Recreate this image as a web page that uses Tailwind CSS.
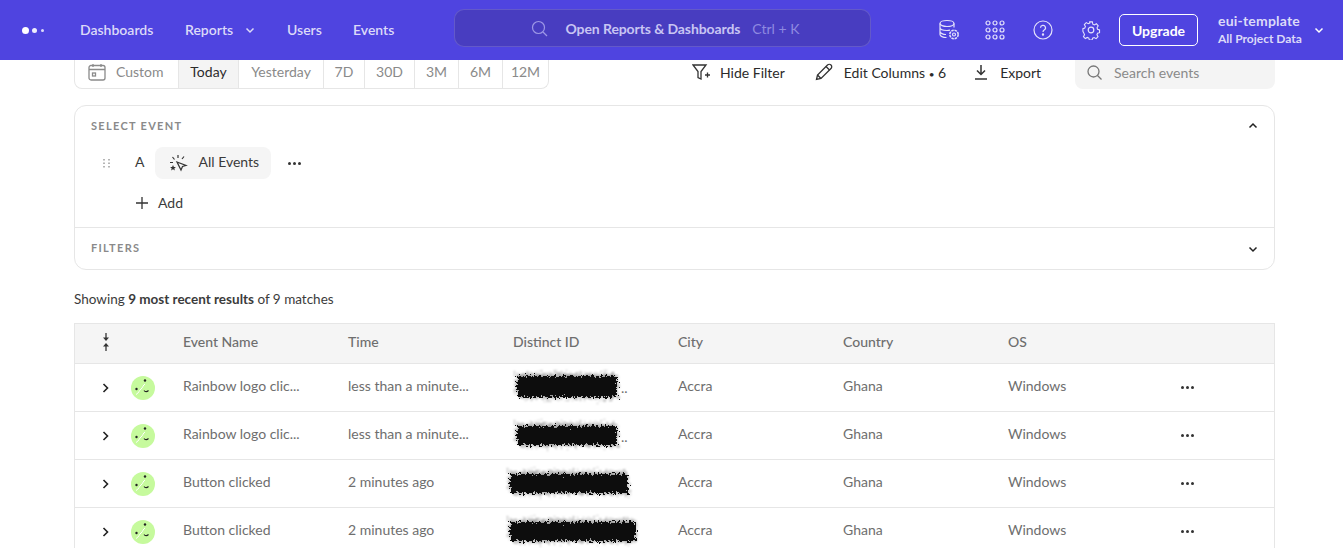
<!DOCTYPE html>
<html lang="en">
  <head>
    <meta charset="UTF-8" />
    <title>Events</title>
    <script src="https://cdn.jsdelivr.net/npm/@tailwindcss/browser@4"></script>
  </head>
  <body class="h-[548px] overflow-hidden bg-white font-['Lato',sans-serif] text-[14px] text-[#3b3b3b]">
    <!-- shared filters for the redacted ids -->
    <svg width="0" height="0" class="absolute">
      <filter id="scribble" x="-10%" y="-40%" width="120%" height="180%">
        <feTurbulence type="fractalNoise" baseFrequency="0.45" numOctaves="2" seed="4" />
        <feDisplacementMap in="SourceGraphic" scale="10" />
        <feGaussianBlur stdDeviation="0.6" />
      </filter>
      <filter id="halo" x="-10%" y="-40%" width="120%" height="180%">
        <feTurbulence type="fractalNoise" baseFrequency="0.7" numOctaves="2" seed="9" />
        <feDisplacementMap in="SourceGraphic" scale="16" />
        <feGaussianBlur stdDeviation="0.8" />
      </filter>
    </svg>

    <!-- Top nav -->
    <nav class="flex h-[60px] items-center bg-[#4f44e0] text-white">
      <div class="flex w-[80px] items-center pl-[22px]">
        <span class="h-[7px] w-[7px] rounded-full bg-white"></span>
        <span class="ml-[3px] h-[5px] w-[5px] rounded-full bg-white/90"></span>
        <span class="ml-[4px] h-[3px] w-[3px] rounded-full bg-white/80"></span>
      </div>
      <div class="flex w-[374px] items-center pb-[1px] font-semibold text-[#dcdaf8]">
        <a class="w-[104px]">Dashboards</a>
        <a class="flex w-[103px] items-center pl-[1px]">
          Reports
          <svg class="ml-[12px] h-[10px] w-[10px]" viewBox="0 0 10 10" fill="none" stroke="currentColor" stroke-width="1.500"><path d="M1.500 3.500 5 7l3.500-3.500" /></svg>
        </a>
        <a class="w-[66px]">Users</a>
        <a>Events</a>
      </div>
      <div class="mb-[4px] flex h-[38px] w-[417px] items-center justify-center rounded-[10px] border border-white/15 bg-[#483dc0] pl-[5px]">
        <svg class="h-[17px] w-[17px] text-[#9d97e6]" viewBox="0 0 17 17" fill="none" stroke="currentColor" stroke-width="1.200"><circle cx="7.500" cy="7.500" r="6" /><path d="m12 12 4 4" /></svg>
        <span class="ml-[18px] font-bold tracking-[-0.1px] text-[#c8c5f3]">Open Reports &amp; Dashboards</span>
        <span class="ml-[12px] text-[#8f89e0]">Ctrl + K</span>
      </div>
      <div class="ml-[67px] flex items-center text-[#e4e2fb]">
        <svg class="h-[22px] w-[22px]" viewBox="0 0 22 22" fill="none" stroke="currentColor" stroke-width="1.200">
          <ellipse cx="9" cy="4.500" rx="7" ry="3" />
          <path d="M2 4.500v11c0 1.600 3 3 6.500 3M2 8.500c0 1.700 3 3 7 3 1 0 2-.1 3-.3M2 12.500c0 1.600 3 3 6 3M16 4.500v4" />
          <circle cx="16" cy="15.500" r="1.500" />
          <circle cx="16" cy="15.500" r="4.200" stroke-dasharray="2.500 0.800" stroke-width="1.500" />
        </svg>
        <svg class="ml-[25px] h-[20px] w-[20px]" viewBox="0 0 20 20" fill="none" stroke="currentColor" stroke-width="1.200">
          <circle cx="3" cy="3" r="2" /><circle cx="10" cy="3" r="2" /><circle cx="17" cy="3" r="2" />
          <circle cx="3" cy="10" r="2" /><circle cx="10" cy="10" r="2" /><circle cx="17" cy="10" r="2" />
          <circle cx="3" cy="17" r="2" /><circle cx="10" cy="17" r="2" /><circle cx="17" cy="17" r="2" />
        </svg>
        <svg class="ml-[28px] h-[20px] w-[20px]" viewBox="0 0 20 20" fill="none" stroke="currentColor" stroke-width="1.200">
          <circle cx="10" cy="10" r="9" />
          <path d="M7.500 7.800a2.500 2.500 0 1 1 3.700 2.200c-.8.500-1.200 1-1.200 2" />
          <circle cx="10" cy="14.500" r=".6" fill="currentColor" />
        </svg>
        <svg class="ml-[28px] h-[20px] w-[20px]" viewBox="0 0 20 20" fill="none" stroke="currentColor" stroke-width="1.200">
          <circle cx="10" cy="10" r="2.800" />
          <path d="M8.500 1h3l.5 2.500 1.700.8 2.300-1.200 2 2.200-1.300 2.200.6 1.700 2.200.8v3l-2.200.6-.7 1.700 1.200 2.200-2.100 2.100-2.200-1.200-1.700.7-.6 2.100h-3l-.6-2.200-1.700-.7-2.200 1.200-2.100-2.100 1.200-2.200-.7-1.700L1 11.500v-3l2.100-.7.700-1.700-1.200-2.200 2.100-2.100 2.200 1.200 1.700-.7z" transform="translate(1 1) scale(.9)" />
        </svg>
      </div>
      <button class="ml-[18px] h-[32px] w-[79px] rounded-[5px] border border-white text-center font-bold text-white">Upgrade</button>
      <div class="ml-[20px] pb-[2px] leading-none">
        <div class="text-[14px] font-bold tracking-[0.2px] text-[#dcdaf8]">eui-template</div>
        <div class="mt-[5px] text-[12px] font-bold text-[#dcdaf8]">All Project Data</div>
      </div>
      <svg class="ml-[12px] h-[10px] w-[10px]" viewBox="0 0 10 10" fill="none" stroke="white" stroke-width="1.500"><path d="M1.500 3.500 5 7l3.500-3.500" /></svg>
    </nav>

    <main class="ml-[74px] w-[1201px]">
      <!-- Toolbar -->
      <div class="flex h-[29px] items-stretch">
        <div class="flex w-[475px] items-stretch rounded-b-[8px] border border-t-0 border-[#e6e6e6] text-[#8a8a8a]">
          <div class="flex w-[103px] items-center pb-[5px] pl-[13px]">
            <svg class="h-[18px] w-[18px]" viewBox="0 0 18 18" fill="none" stroke="#8a8a8a" stroke-width="1.300">
              <rect x="1" y="2.500" width="16" height="14.500" rx="2" />
              <path d="M1 6.500h16M5 1v3M13 1v3" />
              <rect x="4.500" y="10" width="3" height="3" />
            </svg>
            <span class="ml-[10px]">Custom</span>
          </div>
          <div class="flex w-[61px] items-center justify-center border-x border-[#e6e6e6] bg-[#f4f4f4] pb-[5px] text-[#2b2b2b]">Today</div>
          <div class="flex w-[85px] items-center justify-center border-r border-[#e6e6e6] pb-[5px]">Yesterday</div>
          <div class="flex w-[41px] items-center justify-center border-r border-[#e6e6e6] pb-[5px]">7D</div>
          <div class="flex w-[50px] items-center justify-center border-r border-[#e6e6e6] pb-[5px]">30D</div>
          <div class="flex w-[44px] items-center justify-center border-r border-[#e6e6e6] pb-[5px]">3M</div>
          <div class="flex w-[44px] items-center justify-center border-r border-[#e6e6e6] pb-[5px]">6M</div>
          <div class="flex flex-1 items-center justify-center pb-[5px]">12M</div>
        </div>
        <div class="ml-[143px] flex items-center pb-[5px] text-[#2b2b2b]">
          <svg class="h-[18px] w-[19px]" viewBox="0 0 19 18" fill="none" stroke="#333" stroke-width="1.300">
            <path d="M1 2h13L9 8.500V16l-3-1.500v-6z" />
            <path d="M13 12h5M15.500 9.500v5" />
          </svg>
          <span class="ml-[9px]">Hide Filter</span>
          <svg class="ml-[30px] h-[18px] w-[18px]" viewBox="0 0 18 18" fill="none" stroke="#333" stroke-width="1.300">
            <path d="M1.500 16.500 2.500 12 12.500 2a1.800 1.800 0 0 1 3.500 3.500L6 15.500z" />
            <path d="m11 3.500 3.500 3.500M2.500 12 6 15.500" />
          </svg>
          <span class="ml-[11px]">Edit Columns <span class="text-[10px]">•</span> 6</span>
          <svg class="ml-[28px] h-[16px] w-[14px]" viewBox="0 0 14 16" fill="none" stroke="#333" stroke-width="1.500">
            <path d="M7 1v9M3 6.500 7 10.500l4-4M1 15h12" />
          </svg>
          <span class="ml-[12px]">Export</span>
        </div>
        <div class="ml-auto flex w-[200px] items-center rounded-b-[8px] bg-[#f4f4f4] pb-[5px] pl-[12px] text-[#8a8a8a]">
          <svg class="h-[15px] w-[15px]" viewBox="0 0 15 15" fill="none" stroke="#777" stroke-width="1.300"><circle cx="6.500" cy="6.500" r="5.500" /><path d="m10.500 10.500 4 4" /></svg>
          <span class="ml-[12px]">Search events</span>
        </div>
      </div>

      <!-- Query card -->
      <section class="mt-[16px] h-[165px] rounded-[12px] border border-[#e6e6e6]">
        <div class="h-[122px] border-b border-[#e6e6e6]">
          <div class="flex items-center justify-between pl-[16px] pr-[16px] pt-[13px]">
            <span class="text-[11px] font-bold leading-[13px] tracking-[1.300px] text-[#8a8a8a]">SELECT EVENT</span>
            <svg class="h-[10px] w-[10px]" viewBox="0 0 10 10" fill="none" stroke="#222" stroke-width="1.500"><path d="M1.500 6.500 5 3l3.500 3.500" /></svg>
          </div>
          <div class="mt-[15px] flex h-[32px] items-center">
            <svg class="ml-[28px] h-[9px] w-[8px]" viewBox="0 0 8 9" fill="#b5b5b5">
              <rect x="0" y="0" width="2" height="1.500" /><rect x="5" y="0" width="2" height="1.500" />
              <rect x="0" y="3.500" width="2" height="1.500" /><rect x="5" y="3.500" width="2" height="1.500" />
              <rect x="0" y="7" width="2" height="1.500" /><rect x="5" y="7" width="2" height="1.500" />
            </svg>
            <span class="ml-[24px] pb-[3px]">A</span>
            <div class="ml-[11px] flex h-[32px] w-[116px] items-center rounded-[8px] bg-[#f5f5f5] pl-[14px]">
              <svg class="h-[18px] w-[19px]" viewBox="0 0 19 18" fill="none" stroke="#333" stroke-width="1.200">
                <path d="M8 8 17 11.500l-3.500 1L12 16z" />
                <path d="M9 1v3M3.500 3 5.500 5.500M15 2.500 13 5M1 8.500h3" />
                <path d="m4 11 .9 2h2l-1.600 1.400.6 2.100L4 15.300l-1.900 1.200.6-2.100L1.100 13h2z" fill="#333" stroke="none" />
              </svg>
              <span class="ml-[10px] pb-[3px]">All Events</span>
            </div>
            <div class="ml-[17px] flex gap-[2px]">
              <span class="h-[3px] w-[3px] rounded-full bg-[#333]"></span>
              <span class="h-[3px] w-[3px] rounded-full bg-[#333]"></span>
              <span class="h-[3px] w-[3px] rounded-full bg-[#333]"></span>
            </div>
          </div>
          <div class="mt-[16px] flex items-center pl-[61px] leading-[16px]">
            <svg class="h-[12px] w-[12px]" viewBox="0 0 12 12" fill="none" stroke="#333" stroke-width="1.300"><path d="M6 0v12M0 6h12" /></svg>
            <span class="ml-[10px]">Add</span>
          </div>
        </div>
        <div class="flex h-[41px] items-center justify-between pl-[16px] pr-[16px]">
          <span class="text-[11px] font-bold tracking-[1.300px] text-[#8a8a8a]">FILTERS</span>
          <svg class="h-[10px] w-[10px]" viewBox="0 0 10 10" fill="none" stroke="#222" stroke-width="1.500"><path d="M1.500 3.500 5 7l3.500-3.500" /></svg>
        </div>
      </section>

      <p class="mt-[20px] text-[13.500px] leading-[18px]">Showing <b>9 most recent results</b> of 9 matches</p>

      <!-- Events table -->
      <div class="mt-[15px] border border-[#e6e6e6] text-[#6e6e6e]">
        <div class="grid h-[40px] grid-cols-[108px_165px_165px_165px_165px_165px_173px_1fr] items-center border-b border-[#e6e6e6] bg-[#f5f5f5] pb-[4px] font-medium">
          <div class="flex pl-[26px]">
            <svg class="h-[18px] w-[10px]" viewBox="0 0 10 18" fill="#333" stroke="#333" stroke-width="1.300">
              <path d="M5 0v5" fill="none" /><path d="M2 4.500h6L5 8z" stroke="none" />
              <path d="M5 18v-5" fill="none" /><path d="M2 13.500h6L5 10z" stroke="none" />
            </svg>
          </div>
          <div>Event Name</div>
          <div>Time</div>
          <div>Distinct ID</div>
          <div>City</div>
          <div>Country</div>
          <div>OS</div>
        </div>

        <div class="grid h-[48px] grid-cols-[108px_165px_165px_165px_165px_165px_173px_1fr] items-center border-b border-[#e6e6e6]">
          <div class="flex items-center pl-[27px]">
            <svg class="h-[10px] w-[8px]" viewBox="0 0 8 10" fill="none" stroke="#222" stroke-width="1.600"><path d="m1.500 1 4 4-4 4" /></svg>
            <svg class="ml-[21px] mt-[1px] h-[24px] w-[24px]" viewBox="0 0 24 24"><circle cx="12" cy="12" r="12" fill="#c6fa9d" /><path d="M5 18.500c3-1.500 3-4 5-5.500s2-4 4-5" stroke="#fff" stroke-width="1" fill="none" /><circle cx="14" cy="4.500" r="1.200" fill="#222" /><circle cx="5.500" cy="13" r="1.200" fill="#222" /><path d="M13 14.500c1 1.500 3 1.500 4.500 0" stroke="#222" stroke-width="1.100" fill="none" /></svg>
          </div>
          <div class="pb-[4px]">Rainbow logo clic...</div>
          <div class="pb-[4px]">less than a minute...</div>
          <div class="flex items-center pb-[4px]"><svg class="ml-[-3px]" width="114" height="40" viewBox="0 0 114 40"><rect x="7" y="8" width="100" height="24" fill="#000" fill-opacity=".4" filter="url(#halo)" /><rect x="7" y="10" width="100" height="21" fill="#08080f" filter="url(#scribble)" /></svg><span class="ml-[-3px] mt-[4px]">..</span></div>
          <div class="pb-[4px]">Accra</div>
          <div class="pb-[4px]">Ghana</div>
          <div class="pb-[4px]">Windows</div>
          <div class="flex gap-[2px]"><span class="h-[3px] w-[3px] rounded-full bg-[#333]"></span><span class="h-[3px] w-[3px] rounded-full bg-[#333]"></span><span class="h-[3px] w-[3px] rounded-full bg-[#333]"></span></div>
        </div>

        <div class="grid h-[48px] grid-cols-[108px_165px_165px_165px_165px_165px_173px_1fr] items-center border-b border-[#e6e6e6]">
          <div class="flex items-center pl-[27px]">
            <svg class="h-[10px] w-[8px]" viewBox="0 0 8 10" fill="none" stroke="#222" stroke-width="1.600"><path d="m1.500 1 4 4-4 4" /></svg>
            <svg class="ml-[21px] mt-[1px] h-[24px] w-[24px]" viewBox="0 0 24 24"><circle cx="12" cy="12" r="12" fill="#c6fa9d" /><path d="M5 18.500c3-1.500 3-4 5-5.500s2-4 4-5" stroke="#fff" stroke-width="1" fill="none" /><circle cx="14" cy="4.500" r="1.200" fill="#222" /><circle cx="5.500" cy="13" r="1.200" fill="#222" /><path d="M13 14.500c1 1.500 3 1.500 4.500 0" stroke="#222" stroke-width="1.100" fill="none" /></svg>
          </div>
          <div class="pb-[4px]">Rainbow logo clic...</div>
          <div class="pb-[4px]">less than a minute...</div>
          <div class="flex items-center pb-[2px]"><svg class="ml-[-3px]" width="114" height="40" viewBox="0 0 114 40"><rect x="7" y="9" width="100" height="22" fill="#000" fill-opacity=".4" filter="url(#halo)" /><rect x="7" y="11" width="100" height="19" fill="#08080f" filter="url(#scribble)" /></svg><span class="ml-[-3px] mt-[4px]">..</span></div>
          <div class="pb-[4px]">Accra</div>
          <div class="pb-[4px]">Ghana</div>
          <div class="pb-[4px]">Windows</div>
          <div class="flex gap-[2px]"><span class="h-[3px] w-[3px] rounded-full bg-[#333]"></span><span class="h-[3px] w-[3px] rounded-full bg-[#333]"></span><span class="h-[3px] w-[3px] rounded-full bg-[#333]"></span></div>
        </div>

        <div class="grid h-[48px] grid-cols-[108px_165px_165px_165px_165px_165px_173px_1fr] items-center border-b border-[#e6e6e6]">
          <div class="flex items-center pl-[27px]">
            <svg class="h-[10px] w-[8px]" viewBox="0 0 8 10" fill="none" stroke="#222" stroke-width="1.600"><path d="m1.500 1 4 4-4 4" /></svg>
            <svg class="ml-[21px] mt-[1px] h-[24px] w-[24px]" viewBox="0 0 24 24"><circle cx="12" cy="12" r="12" fill="#c6fa9d" /><path d="M5 18.500c3-1.500 3-4 5-5.500s2-4 4-5" stroke="#fff" stroke-width="1" fill="none" /><circle cx="14" cy="4.500" r="1.200" fill="#222" /><circle cx="5.500" cy="13" r="1.200" fill="#222" /><path d="M13 14.500c1 1.500 3 1.500 4.500 0" stroke="#222" stroke-width="1.100" fill="none" /></svg>
          </div>
          <div class="pb-[4px]">Button clicked</div>
          <div class="pb-[4px]">2 minutes ago</div>
          <div class="pb-[2px]"><svg class="ml-[-10px]" width="132" height="40" viewBox="0 0 132 40"><rect x="7" y="9" width="118" height="22" fill="#000" fill-opacity=".4" filter="url(#halo)" /><rect x="7" y="11" width="118" height="19" fill="#08080f" filter="url(#scribble)" /></svg></div>
          <div class="pb-[4px]">Accra</div>
          <div class="pb-[4px]">Ghana</div>
          <div class="pb-[4px]">Windows</div>
          <div class="flex gap-[2px]"><span class="h-[3px] w-[3px] rounded-full bg-[#333]"></span><span class="h-[3px] w-[3px] rounded-full bg-[#333]"></span><span class="h-[3px] w-[3px] rounded-full bg-[#333]"></span></div>
        </div>

        <div class="grid h-[48px] grid-cols-[108px_165px_165px_165px_165px_165px_173px_1fr] items-center border-b border-[#e6e6e6]">
          <div class="flex items-center pl-[27px]">
            <svg class="h-[10px] w-[8px]" viewBox="0 0 8 10" fill="none" stroke="#222" stroke-width="1.600"><path d="m1.500 1 4 4-4 4" /></svg>
            <svg class="ml-[21px] mt-[1px] h-[24px] w-[24px]" viewBox="0 0 24 24"><circle cx="12" cy="12" r="12" fill="#c6fa9d" /><path d="M5 18.500c3-1.500 3-4 5-5.500s2-4 4-5" stroke="#fff" stroke-width="1" fill="none" /><circle cx="14" cy="4.500" r="1.200" fill="#222" /><circle cx="5.500" cy="13" r="1.200" fill="#222" /><path d="M13 14.500c1 1.500 3 1.500 4.500 0" stroke="#222" stroke-width="1.100" fill="none" /></svg>
          </div>
          <div class="pb-[4px]">Button clicked</div>
          <div class="pb-[4px]">2 minutes ago</div>
          <div class="pb-[2px]"><svg class="ml-[-10px]" width="140" height="40" viewBox="0 0 140 40"><rect x="7" y="9" width="126" height="22" fill="#000" fill-opacity=".4" filter="url(#halo)" /><rect x="7" y="11" width="126" height="19" fill="#08080f" filter="url(#scribble)" /></svg></div>
          <div class="pb-[4px]">Accra</div>
          <div class="pb-[4px]">Ghana</div>
          <div class="pb-[4px]">Windows</div>
          <div class="flex gap-[2px]"><span class="h-[3px] w-[3px] rounded-full bg-[#333]"></span><span class="h-[3px] w-[3px] rounded-full bg-[#333]"></span><span class="h-[3px] w-[3px] rounded-full bg-[#333]"></span></div>
        </div>
      </div>
    </main>
  </body>
</html>
